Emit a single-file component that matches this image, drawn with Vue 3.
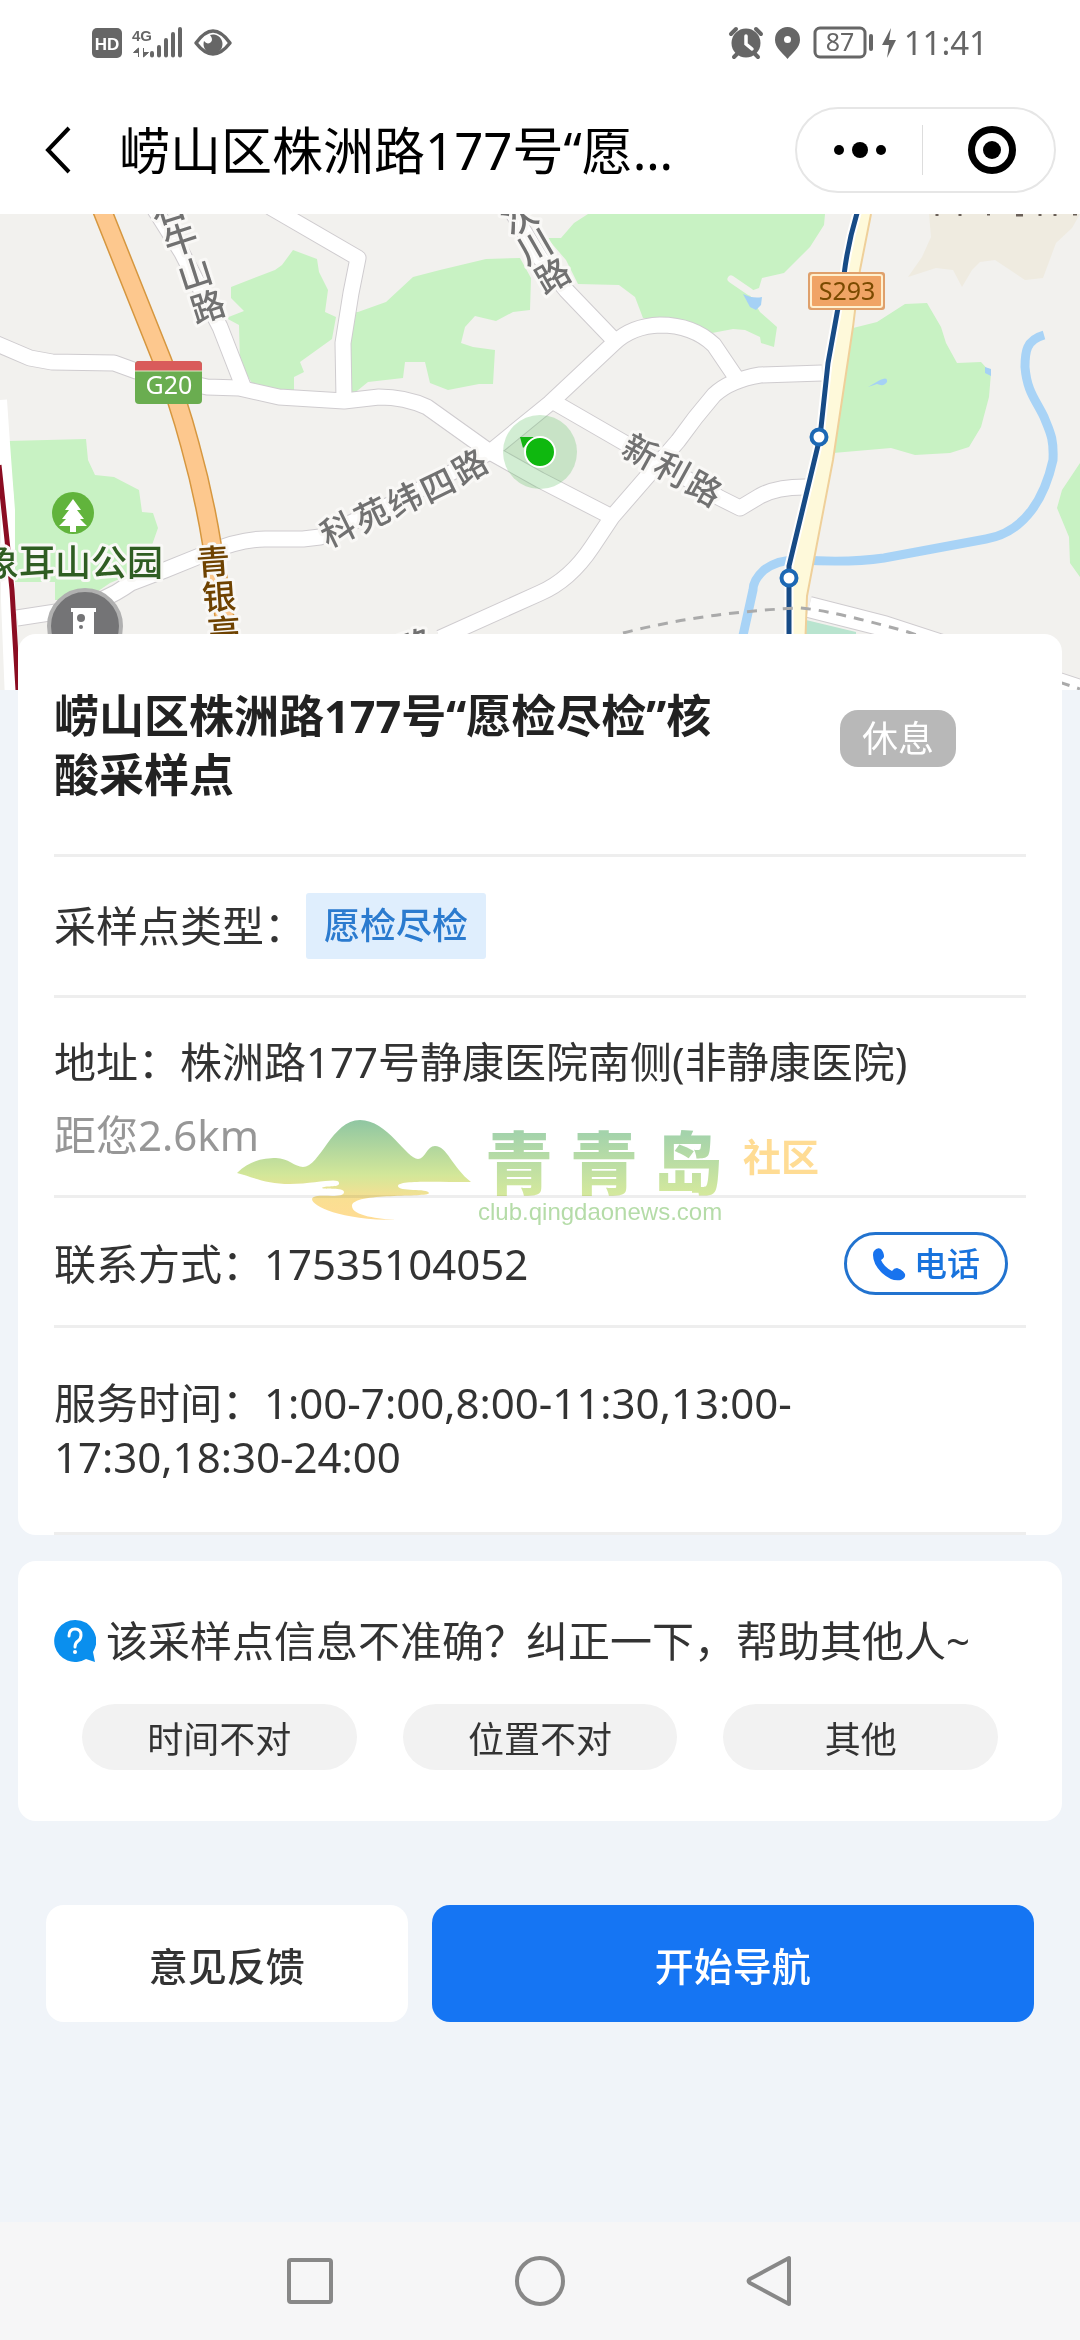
<template>
  <div class="page">
    <header class="top">
      <div class="status-bar">
        <div class="status-group">
          <svg class="status-icon" width="144" height="36" viewBox="90 25 144 36" aria-hidden="true">
            <rect x="92" y="28" width="30" height="30" rx="5" fill="#666" />
            <text x="107" y="50" class="hd-text">HD</text>
            <text x="132" y="41" class="net-text">4G</text>
            <path d="M138.500 57V48l-5 4.500h5zM143.500 48v9l5-4.500h-5z" class="net-arrows" />
            <path d="M152 53v2.500M159 47v8.500M166 40v15.500M173 34v21.500M180 29v26.500" class="signal" />
            <path d="M196 43q17-24 34 0q-17 22-34 0z" fill="none" stroke="#666" stroke-width="3.500" stroke-linejoin="round" />
            <path d="M210 35a9.500 9.500 0 1 1-6 6q3 4 6.500 1.500t-.5-7.500z" fill="#666" />
          </svg>
        </div>
        <div class="status-group">
          <svg class="status-icon" width="172" height="36" viewBox="728 25 172 36" aria-hidden="true">
            <circle cx="746" cy="43" r="14.500" fill="#666" />
            <path d="M731 34l5-5M761 34l-5-5M734 57l4-4M758 57l-4-4" stroke="#666" stroke-width="4" stroke-linecap="round" />
            <path d="M746 36v8l6 5" fill="none" stroke="#fff" stroke-width="3.500" stroke-linecap="round" />
            <path d="M787.500 27a12.500 12.500 0 0 1 12.500 13c0 8-8 13-12.500 19c-4.500-6-12.500-11-12.500-19a12.500 12.500 0 0 1 12.500-13z" fill="#666" />
            <circle cx="787.500" cy="39.500" r="3.500" fill="#fff" />
            <rect x="815" y="28" width="50" height="29" rx="5" fill="none" stroke="#666" stroke-width="3" />
            <path d="M871 36v13" stroke="#666" stroke-width="4" stroke-linecap="round" />
            <text x="840" y="51" class="battery-text">87</text>
            <path d="M891 28l-9 17h7l-2 13l9-18h-7z" fill="#666" />
          </svg>
          <span class="clock">11:41</span>
        </div>
      </div>

      <div class="nav-bar">
        <button class="back-btn" type="button" aria-label="返回">
          <svg width="28" height="50" viewBox="0 0 28 50">
            <path d="M25 3L4 25L25 47" fill="none" stroke="#000" stroke-width="4" />
          </svg>
        </button>
        <h1 class="nav-title">{{ site.name }}</h1>
        <div class="capsule">
          <button type="button" aria-label="更多">
            <svg width="54" height="20" viewBox="0 0 54 20">
              <circle cx="6" cy="10" r="5" />
              <circle cx="27" cy="10" r="8" />
              <circle cx="48" cy="10" r="5" />
            </svg>
          </button>
          <button type="button" aria-label="关闭">
            <svg width="50" height="50" viewBox="0 0 50 50">
              <circle cx="25" cy="25" r="20.500" fill="none" stroke="#000" stroke-width="7" />
              <circle cx="25" cy="25" r="9" />
            </svg>
          </button>
        </div>
      </div>
    </header>

    <svg class="map" viewBox="0 214 1080 476" preserveAspectRatio="xMidYMin slice" role="img" aria-label="地图">
      <rect x="0" y="214" width="1080" height="476" fill="#f2f1ee" />
      <polygon v-for="(points, i) in greens" :key="'g' + i" :points="points" fill="#c8f2c3" />
      <polygon points="929,214 1080,214 1072,228 1056,243 1043,278 1025,280 995,260 980,262 972,270 962,287 953,270 936,268 908,277 922,257 931,237" fill="#efebe0" />
      <path d="M731 279L750 292" stroke="#f2f1ee" stroke-width="7" stroke-linecap="round" />
      <path d="M743 294Q753 299 762 297L761 305L756 310L750 307zM868 387L880 380Q888 376 887 382Q884 387 877 384zM985 367l6 2v7l-6-3z" fill="#a5d1f5" />
      <path d="M1044 335C1026 340 1025 352 1025 367C1027 392 1036 400 1044 417C1050 432 1054 438 1053 460C1045 496 1026 532 986 539L884 558Q850 563 800 560Q778 559 764 570Q753 580 753 590L742 640" fill="none" stroke="#a8d3f6" stroke-width="9" />

      <path v-for="(d, i) in roads" :key="'c' + i" :d="d" class="road-case" />
      <path v-for="(d, i) in roads" :key="'r' + i" :d="d" class="road-fill" />
      <path d="M809 607Q845 616 884 626L1080 690" fill="none" stroke="#cfcccf" stroke-width="22" />
      <path d="M809 607Q845 616 884 626L1080 690" fill="none" stroke="#fff" stroke-width="20" />
      <path d="M806 620L856 632V640H806z" fill="#b9e4cf" />

      <path d="M100 205L162 360Q178 400 190 445Q204 495 212 545L232 660" fill="none" stroke="#d6973f" stroke-width="20" />
      <path d="M100 205L162 360Q178 400 190 445Q204 495 212 545L232 660" fill="none" stroke="#fdc88e" stroke-width="17" />

      <path d="M858 214H871L860 270L853 327L833 460L807 596L805 650H789V578L820 437L836 310z" fill="#fef9da" />
      <path d="M871 214L860 270L853 327L833 460L807 596L805 650" fill="none" stroke="#efd09a" stroke-width="2" />
      <path d="M858 210Q848 242 844 275L828 363L820 437L789 566V650" fill="none" stroke="#fff" stroke-width="9" />
      <path d="M858 210Q848 242 844 275L828 363L820 437L789 566V650" fill="none" stroke="#174b86" stroke-width="5" />
      <circle cx="819" cy="437" r="7.500" class="station" />
      <circle cx="789" cy="578" r="7.500" class="station" />
      <path d="M623 633Q705 612 800 608Q830 610 908 632L1080 689" fill="none" stroke="#aaa" stroke-width="3" stroke-dasharray="10 8" />

      <path d="M0 400Q4 460 8 510V600L12 700" fill="none" stroke="#fff" stroke-width="14" />
      <path d="M-1 465L7 540L12 590L18 690" fill="none" stroke="#8b0d22" stroke-width="5" />

      <rect x="135" y="361" width="67" height="43" rx="4" fill="#6aad50" />
      <path d="M135 371v-6a4 4 0 0 1 4-4h59a4 4 0 0 1 4 4v6z" fill="#d95b5b" />
      <path d="M135 371h67" stroke="#d9ecc8" />
      <text x="169" y="394" class="sign sign-g">G20</text>
      <rect x="808" y="272" width="77" height="38" rx="3" fill="#dfa06b" />
      <rect x="811" y="275" width="71" height="32" rx="2" fill="#f0a465" stroke="#fff0cf" stroke-width="2" />
      <text x="847" y="300" class="sign sign-s">S293</text>

      <circle cx="73" cy="513" r="21" fill="#61b43c" />
      <path d="M73 499l-8 11h4l-7 9h4l-7 7h11v6h6v-6h11l-7-7h4l-7-9h4z" fill="#fff" />
      <circle cx="85" cy="626" r="36" fill="#747476" stroke="#b0b0b0" stroke-width="4" />
      <path d="M71 608h25v4h-2v40H73v-40h-2z" fill="#fff" />
      <circle cx="81" cy="618" r="4" fill="#747476" />
      <circle cx="81" cy="627" r="2" fill="#747476" />

      <text
        v-for="(label, i) in mapLabels"
        :key="'t' + i"
        :transform="`translate(${label.x} ${label.y}) rotate(${label.angle})`"
        :fill="label.color || '#717171'"
        class="map-label"
        y="12"
      >{{ label.text }}</text>
      <text x="-17" y="576" class="park-label">象耳山公园</text>
      <path d="M937 214v2M960 214v2M987 214h3M1016 215h7M1040 214v2M1055 214v2M1073 214h4" stroke="#6a6058" stroke-width="3" />

      <circle cx="540" cy="452" r="37" fill="#5fbf62" fill-opacity="0.28" />
      <path d="M520 437h14l-11 11z" fill="#12b412" />
      <circle cx="540" cy="452" r="15" fill="#0fb80f" stroke="#fff" stroke-width="2" />
    </svg>

    <main class="content">
      <section class="card detail">
        <div class="row title-row">
          <h2>{{ site.name }}</h2>
          <span class="state">{{ site.state }}</span>
        </div>
        <div class="row type-row">
          <span>采样点类型：</span>
          <span class="tag">{{ site.type }}</span>
        </div>
        <div class="row address-row">
          <p>地址：{{ site.address }}</p>
          <p class="distance">距您{{ site.distance }}</p>
          <svg class="watermark" width="620" height="140" viewBox="0 0 620 140">
            <defs>
              <linearGradient id="hill" x1="0" y1="20" x2="0" y2="120" gradientUnits="userSpaceOnUse">
                <stop offset="0" stop-color="#8fc6a2" />
                <stop offset="0.55" stop-color="#d3e799" />
                <stop offset="0.8" stop-color="#fadf92" />
                <stop offset="1" stop-color="#ffdc94" />
              </linearGradient>
              <linearGradient id="brand" x1="0" y1="34" x2="0" y2="98" gradientUnits="userSpaceOnUse">
                <stop offset="0" stop-color="#a4d3ab" />
                <stop offset="1" stop-color="#d7ea9c" />
              </linearGradient>
            </defs>
            <path d="M17 73C30 60 45 58 56 58C68 58 75 67 83 67C100 67 112 20 140 20C167 20 187 59 198 59C205 59 207 46 215 46C227 46 232 67 251 82C215 82 178 80 178 86C178 92 208 88 209 93C209 98 132 92 132 106C132 116 160 119 176 120C120 120 92 106 92 99C94 92 124 100 124 92C124 87 104 90 102 88C104 85 120 88 119 83C119 77 95 84 70 84C45 84 30 76 17 73z" fill="url(#hill)" />
            <g class="wm-brand" fill="url(#brand)">
              <text x="299" y="89">青</text>
              <text x="384" y="89">青</text>
              <text x="468" y="89">岛</text>
            </g>
            <text x="523" y="71" class="wm-side">社区</text>
            <text x="258" y="120" class="wm-url">club.qingdaonews.com</text>
          </svg>
        </div>
        <div class="row phone-row">
          <span>联系方式：{{ site.phone }}</span>
          <a class="call-btn" :href="'tel:' + site.phone">
            <svg width="34" height="34" viewBox="0 0 34 34" aria-hidden="true">
              <path d="M2 4Q5 0 9 2Q12 5 12 10Q11 12 9 13Q12 20 20 24Q22 21 25 21Q30 22 33 27Q34 31 29 33Q20 35 10 26Q1 17 1 8Q1 5 2 4z" fill="#1873ee" />
            </svg>
            电话
          </a>
        </div>
        <div class="row hours-row">
          <p>服务时间：1:00-7:00,8:00-11:30,13:00-<wbr>17:30,18:30-24:00</p>
        </div>
      </section>

      <section class="card report">
        <p class="report-title">
          <svg width="42" height="42" viewBox="0 0 42 42" aria-hidden="true">
            <path d="M21 0a21 21 0 0 1 18 32l2 10l-9-3a21 21 0 1 1-11-39z" fill="#0a8fee" />
            <path d="M15 16q0-7 6-7t6 6q0 4-3 6t-3 6" fill="none" stroke="#fff" stroke-width="3" stroke-linecap="round" />
            <circle cx="21" cy="32" r="2" fill="#fff" />
          </svg>
          该采样点信息不准确？纠正一下，帮助其他人~
        </p>
        <div class="reasons">
          <button v-for="reason in reasons" :key="reason" type="button">{{ reason }}</button>
        </div>
      </section>

      <div class="actions">
        <button class="feedback-btn" type="button">意见反馈</button>
        <button class="navigate-btn" type="button">开始导航</button>
      </div>
    </main>

    <nav class="system-nav">
      <button type="button" aria-label="最近任务">
        <svg width="54" height="54" viewBox="0 0 54 54"><rect x="6" y="6" width="42" height="42" rx="2" /></svg>
      </button>
      <button type="button" aria-label="主屏幕">
        <svg width="54" height="54" viewBox="0 0 54 54"><circle cx="27" cy="27" r="23" /></svg>
      </button>
      <button type="button" aria-label="返回">
        <svg width="54" height="54" viewBox="0 0 54 54"><path d="M46 4V50L7 29Q4 27 7 25z" /></svg>
      </button>
    </nav>
  </div>
</template>

<script setup>
const site = {
  name: '崂山区株洲路177号“愿检尽检”核酸采样点',
  state: '休息',
  type: '愿检尽检',
  address: '株洲路177号静康医院南侧(非静康医院)',
  distance: '2.6km',
  phone: '17535104052'
}

const reasons = ['时间不对', '位置不对', '其他']

const greens = [
  '293,250 317,259 319,272 328,290 325,312 336,317 332,339 300,362 304,372 294,377 294,391 253,385 240,363 239,325 226,318 244,311 231,298 231,287 275,270 282,265',
  '358,312 386,302 413,277 440,270 486,259 520,258 531,278 530,310 513,312 496,321 475,316 465,327 461,343 473,347 495,350 493,384 479,384 448,390 430,383 425,362 405,362 403,378 368,382 352,395 345,350 350,312',
  '8,441 86,439 88,460 95,475 114,477 139,490 142,512 153,513 158,528 152,545 140,560 129,575 110,583 85,600 55,600 55,582 14,582 14,500',
  '588,214 825,214 824,225 810,247 784,273 762,278 759,288 748,292 760,312 777,327 774,347 761,343 760,337 745,330 733,329 712,333 678,320 643,318 635,297 619,285 578,284 566,260 547,238 561,238 574,223',
  '853,328 877,322 905,304 927,303 941,327 946,343 957,363 981,362 991,373 989,397 981,427 969,447 950,453 915,455 891,448 833,453',
  '1080,463 1062,490 1057,508 1069,537 1070,563 1080,577'
]

const roads = [
  'M-5 343L30 358L52 362L114 363L136 371L207 387L239 388L279 397L344 401L379 397Q405 397 427 407L490 452L540 480L612 517',
  'M152 205L182 253L220 327L243 386',
  'M270 207L358 258L351 293L343 343L344 399',
  'M490 452L550 403L614 343Q632 326 660 325Q693 325 714 345L737 379',
  'M508 205L540 258L566 290L614 340',
  'M552 401L623 442L720 498L740 508L760 496Q778 486 810 487',
  'M822 373L760 375Q730 380 714 395Q695 417 678 441L612 517L592 547Q570 580 540 593L440 638',
  'M490 452L400 500L320 537L303 539L265 539Q240 539 207 553L165 570L131 583Q103 603 69 610L17 618'
]

const mapLabels = [
  { text: '石', x: 168, y: 209, angle: -18 },
  { text: '牛', x: 181, y: 240, angle: -18 },
  { text: '山', x: 195, y: 274, angle: -18 },
  { text: '路', x: 208, y: 307, angle: -18 },
  { text: '次', x: 520, y: 218, angle: -30 },
  { text: '川', x: 535, y: 247, angle: -30 },
  { text: '路', x: 553, y: 276, angle: -30 },
  { text: '科', x: 338, y: 530, angle: -26 },
  { text: '苑', x: 372, y: 515, angle: -26 },
  { text: '纬', x: 405, y: 500, angle: -26 },
  { text: '四', x: 438, y: 486, angle: -26 },
  { text: '路', x: 470, y: 467, angle: -30 },
  { text: '新', x: 640, y: 452, angle: 29 },
  { text: '利', x: 672, y: 470, angle: 29 },
  { text: '路', x: 704, y: 489, angle: 29 },
  { text: '路', x: 416, y: 646, angle: -20 },
  { text: '青', x: 213, y: 562, angle: -4, color: '#6e4200' },
  { text: '银', x: 219, y: 597, angle: -4, color: '#6e4200' },
  { text: '高', x: 224, y: 632, angle: -4, color: '#6e4200' }
]
</script>

<style>
body {
  margin: 0;
  background: #f0f4f9;
}
</style>

<style scoped>
.page {
  min-height: 100vh;
  display: flex;
  flex-direction: column;
  background: #f0f4f9;
  color: #333;
  font-family: 'Noto Sans', 'Noto Sans CJK SC', sans-serif;
  font-size: 42px;
  line-height: 54px;
}

h1,
h2,
p {
  margin: 0;
}

button {
  border: none;
  padding: 0;
  background: none;
  color: inherit;
  font-family: inherit;
  cursor: pointer;
}

svg {
  display: block;
}

/* Top */
.top {
  background: #fff;
}

.status-bar {
  height: 86px;
  padding: 0 92px 0 90px;
  display: flex;
  justify-content: space-between;
  align-items: center;
}

.status-group {
  display: flex;
  align-items: center;
  gap: 4px;
}

.hd-text {
  fill: #fff;
  font-family: 'Liberation Sans', sans-serif;
  font-size: 17px;
  font-weight: 700;
  text-anchor: middle;
}

.net-text {
  fill: #666;
  font-family: 'Liberation Sans', sans-serif;
  font-size: 15px;
  font-weight: 700;
}

.net-arrows {
  fill: #666;
  stroke: #666;
  stroke-width: 1;
}

.signal {
  stroke: #666;
  stroke-width: 4;
  stroke-linecap: round;
}

.battery-text {
  fill: #666;
  font-size: 25px;
  text-anchor: middle;
}

.clock {
  color: #666;
  font-size: 33px;
}

.nav-bar {
  height: 128px;
  padding: 0 24px 0 44px;
  display: flex;
  align-items: center;
}

.back-btn {
  width: 75px;
}

.nav-title {
  flex: 1;
  min-width: 0;
  margin-right: 96px;
  overflow: hidden;
  color: #000;
  font-size: 51px;
  font-weight: 400;
  line-height: 72px;
  white-space: nowrap;
  text-overflow: ellipsis;
}

.capsule {
  width: 261px;
  height: 86px;
  box-sizing: border-box;
  border: 2px solid #e6e6e6;
  border-radius: 43px;
  display: flex;
  align-items: center;
}

.capsule button {
  flex: 1;
  height: 50px;
  display: flex;
  align-items: center;
  justify-content: center;
}

.capsule button + button {
  padding-left: 6px;
  border-left: 1px solid #ddd;
}

/* Map */
.map {
  width: 100%;
  height: 476px;
}

.road-case,
.road-fill {
  fill: none;
  stroke-linejoin: round;
}

.road-case {
  stroke: #cfcccf;
  stroke-width: 17px;
}

.road-fill {
  stroke: #fff;
  stroke-width: 15px;
}

.station {
  fill: #fff;
  stroke: #1c68b4;
  stroke-width: 4px;
}

.sign {
  font-size: 25px;
  text-anchor: middle;
}

.sign-g {
  fill: #fff;
}

.sign-s {
  fill: #7a4a00;
}

.map-label,
.park-label {
  font-family: 'Noto Sans CJK SC', sans-serif;
  font-weight: 500;
  stroke: #f9f8f6;
  stroke-width: 6px;
  stroke-linejoin: round;
  paint-order: stroke;
}

.map-label {
  font-size: 34px;
  text-anchor: middle;
}

.park-label {
  fill: #2f5d22;
  font-size: 36px;
}

/* Cards */
.content {
  position: relative;
  flex: 1;
  margin-top: -56px;
  padding: 0 18px;
}

.card {
  padding: 0 36px;
  border-radius: 18px;
  background: #fff;
}

.row {
  border-bottom: 3px solid #eee;
}

.title-row {
  padding: 52px 70px 50px 0;
  display: flex;
  justify-content: space-between;
  align-items: flex-start;
}

.title-row h2 {
  width: 76%;
  color: #222;
  font-size: 45px;
  font-weight: 700;
  line-height: 59px;
}

.state {
  margin-top: 24px;
  padding: 0 22px;
  border-radius: 18px;
  background: #b8b8b8;
  color: #fff;
  font-size: 36px;
  line-height: 57px;
}

.type-row {
  padding: 36px 0;
  display: flex;
  align-items: center;
}

.tag {
  padding: 0 18px;
  border-radius: 3px;
  background: #dfeefd;
  color: #2b7bcf;
  font-size: 36px;
  font-weight: 500;
  line-height: 66px;
}

.address-row {
  position: relative;
  padding: 37px 0 33px;
}

.distance {
  margin-top: 19px;
  color: #979797;
}

/* Site logo laid over the address block */
.watermark {
  position: absolute;
  top: 102px;
  left: 166px;
  mix-blend-mode: multiply;
  pointer-events: none;
}

.wm-brand {
  font-family: 'Noto Sans CJK SC', sans-serif;
  font-size: 68px;
  font-weight: 900;
  text-anchor: middle;
}

.wm-side {
  fill: #ffdc94;
  font-family: 'Noto Sans CJK SC', sans-serif;
  font-size: 38px;
  font-weight: 700;
}

.wm-url {
  fill: #b5dca8;
  font-family: 'Liberation Sans', sans-serif;
  font-size: 24px;
}

.phone-row {
  padding: 34px 18px 30px 0;
  display: flex;
  justify-content: space-between;
  align-items: center;
}

.call-btn {
  width: 164px;
  height: 63px;
  box-sizing: border-box;
  border: 3px solid #2273cf;
  border-radius: 32px;
  display: flex;
  align-items: center;
  justify-content: center;
  gap: 8px;
  color: #1873dd;
  font-size: 33px;
  font-weight: 500;
  text-decoration: none;
}

.hours-row {
  padding: 48px 0;
}

/* Report */
.report {
  margin-top: 26px;
  padding-top: 53px;
  padding-bottom: 51px;
}

.report-title {
  display: flex;
  align-items: center;
  gap: 10px;
}

.reasons {
  margin-top: 36px;
  padding: 0 28px;
  display: flex;
  gap: 46px;
}

.reasons button {
  flex: 1;
  height: 66px;
  border-radius: 33px;
  background: #f2f2f2;
  font-size: 36px;
}

/* Actions */
.actions {
  margin-top: 84px;
  padding: 0 28px;
  display: flex;
  gap: 24px;
}

.actions button {
  height: 117px;
  border-radius: 18px;
  font-size: 39px;
  font-weight: 500;
}

.feedback-btn {
  flex: 3;
  background: #fff;
}

.navigate-btn {
  flex: 5;
  background: #1575f3;
  color: #fff;
}

/* System navigation */
.system-nav {
  height: 118px;
  display: flex;
  align-items: center;
  justify-content: center;
  gap: 176px;
  background: #f6f6f7;
}

.system-nav svg {
  fill: none;
  stroke: #888;
  stroke-width: 4px;
  stroke-linejoin: round;
}
</style>
